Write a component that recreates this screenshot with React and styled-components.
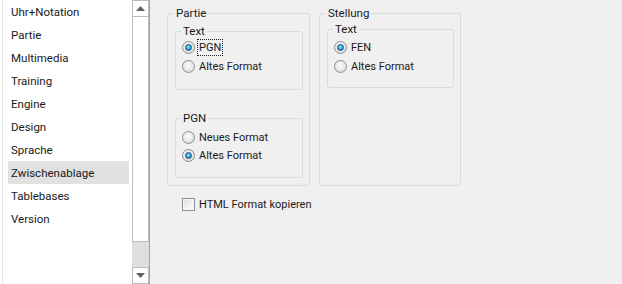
import React from 'react';
import styled, { createGlobalStyle } from 'styled-components';

const Global = createGlobalStyle`
  html, body { margin: 0; padding: 0; background: #f0f0f0; }
  body {
    font-family: Roboto, "Segoe UI", sans-serif;
    font-size: 11px;
    color: #1a1a1a;
  }
`;

const Window = styled.div`
  display: flex;
  width: 622px;
  height: 284px;
  overflow: hidden;
  background: #f0f0f0;
`;

const Sidebar = styled.div`
  display: flex;
  flex: none;
  width: 150px;
  box-sizing: border-box;
  background: #fff;
  border-right: 1px solid #a3a3a3;
`;

const List = styled.ul`
  flex: 1;
  margin: 0 0 0 2px;
  padding: 0 3px 0 5px;
  list-style: none;
  border-left: 1px solid #e6e6e6;
  font-size: 11.5px;
`;

const Item = styled.li`
  height: 23px;
  line-height: 24px;
  padding-left: 3px;
  white-space: nowrap;
  background: ${p => (p.$selected ? '#e1e1e1' : 'transparent')};
`;

const Scrollbar = styled.div`
  display: flex;
  flex-direction: column;
  flex: none;
  width: 17px;
  background: #dedede;
`;

const ScrollButton = styled.div`
  flex: none;
  height: 17px;
  box-sizing: border-box;
  border: 1px solid #bdbdbd;
  background: #fff;
  display: flex;
  align-items: center;
  justify-content: center;
`;

const Thumb = styled.div`
  flex: none;
  height: 225px;
  box-sizing: border-box;
  border: 1px solid #bdbdbd;
  border-top: none;
  background: #fff;
`;

const Track = styled.div`
  flex: 1;
`;

const Main = styled.div`
  flex: 1;
  display: flex;
  flex-direction: column;
  padding: 6px 0 0 17px;
`;

const GroupRow = styled.div`
  display: flex;
  gap: 9px;
`;

const Group = styled.fieldset`
  margin: ${p => p.$margin || '0'};
  padding: ${p => p.$pad || '0'};
  width: ${p => (p.$width ? p.$width + 'px' : 'auto')};
  box-sizing: border-box;
  border: 1px solid #d5dce2;
  border-radius: 3px;
  min-width: 0;
`;

const Legend = styled.legend`
  margin-left: ${p => p.$offset || 6}px;
  padding: 0 2px;
  line-height: 14px;
  height: 14px;
  font-size: 11.5px;
`;

const RadioList = styled.div`
  display: flex;
  flex-direction: column;
  padding: ${p => p.$pad};
`;

const OptionRow = styled.label`
  display: flex;
  align-items: center;
  height: ${p => p.$h}px;
  padding-left: 6px;
  white-space: nowrap;
`;

const Radio = styled.span`
  flex: none;
  width: 13px;
  height: 13px;
  box-sizing: border-box;
  border-radius: 50%;
  border: 1px solid #8c8e90;
  background: radial-gradient(circle at 45% 40%, #fbfbfb 0%, #ececec 45%, #cfcfcf 100%);
  display: flex;
  align-items: center;
  justify-content: center;
  margin-right: 4px;

  &::after {
    content: '';
    display: ${p => (p.$checked ? 'block' : 'none')};
    width: 7px;
    height: 7px;
    box-sizing: border-box;
    border-radius: 50%;
    border: 1px solid #1b4f80;
    background: radial-gradient(circle at 45% 40%, #a8e4fc 0%, #3aa0dc 50%, #145e9e 100%);
  }
`;

const OptionText = styled.span`
  padding: 1px 1px 0;
  margin-left: -1px;
  line-height: 14px;
  outline: ${p => (p.$focus ? '1px dotted #222' : 'none')};
  outline-offset: 0;
`;

const CheckRow = styled.label`
  display: flex;
  align-items: center;
  height: 13px;
  margin: 12px 0 0 15px;
  white-space: nowrap;
`;

const CheckBox = styled.span`
  flex: none;
  width: 13px;
  height: 13px;
  box-sizing: border-box;
  border: 1px solid #8c8e90;
  background: linear-gradient(135deg, #dcdcdc 0%, #f4f4f4 60%, #ffffff 100%);
  box-shadow: inset 0 0 0 1px #f6f6f6;
  margin-right: 4px;
`;

const Arrow = ({ down }) => (
  <svg width="9" height="5" viewBox="0 0 9 5">
    <path d={down ? 'M0 0 H9 L4.5 5 Z' : 'M0 5 H9 L4.5 0 Z'} fill="#606060" />
  </svg>
);

const items = [
  'Uhr+Notation', 'Partie', 'Multimedia', 'Training', 'Engine',
  'Design', 'Sprache', 'Zwischenablage', 'Tablebases', 'Version',
];

export default function App() {
  return (
    <>
      <Global />
      <Window>
        <Sidebar>
          <List>
            {items.map(t => (
              <Item key={t} $selected={t === 'Zwischenablage'}>{t}</Item>
            ))}
          </List>
          <Scrollbar>
            <ScrollButton><Arrow /></ScrollButton>
            <Thumb />
            <Track />
            <ScrollButton><Arrow down /></ScrollButton>
          </Scrollbar>
        </Sidebar>
        <Main>
          <GroupRow>
            <Group $width={143} $pad="0 0 7px 0">
              <Legend>Partie</Legend>
              <Group $margin="4px 6px 0 7px" $pad="0 0 13px 0">
                <Legend $offset={5}>Text</Legend>
                <RadioList $pad="0">
                  <OptionRow $h={19}><Radio $checked /><OptionText $focus>PGN</OptionText></OptionRow>
                  <OptionRow $h={19}><Radio /><OptionText>Altes Format</OptionText></OptionRow>
                </RadioList>
              </Group>
              <Group $margin="21px 6px 0 7px" $pad="0 0 13px 0">
                <Legend $offset={5}>PGN</Legend>
                <RadioList $pad="3px 0 0 0">
                  <OptionRow $h={18}><Radio /><OptionText>Neues Format</OptionText></OptionRow>
                  <OptionRow $h={18}><Radio $checked /><OptionText>Altes Format</OptionText></OptionRow>
                </RadioList>
              </Group>
            </Group>
            <Group $width={142}>
              <Legend>Stellung</Legend>
              <Group $margin="2px 6px 0 7px" $pad="0 0 11px 0">
                <Legend $offset={5}>Text</Legend>
                <RadioList $pad="2px 0 0 0">
                  <OptionRow $h={19}><Radio $checked /><OptionText>FEN</OptionText></OptionRow>
                  <OptionRow $h={19}><Radio /><OptionText>Altes Format</OptionText></OptionRow>
                </RadioList>
              </Group>
            </Group>
          </GroupRow>
          <CheckRow>
            <CheckBox />
            <span>HTML Format kopieren</span>
          </CheckRow>
        </Main>
      </Window>
    </>
  );
}
